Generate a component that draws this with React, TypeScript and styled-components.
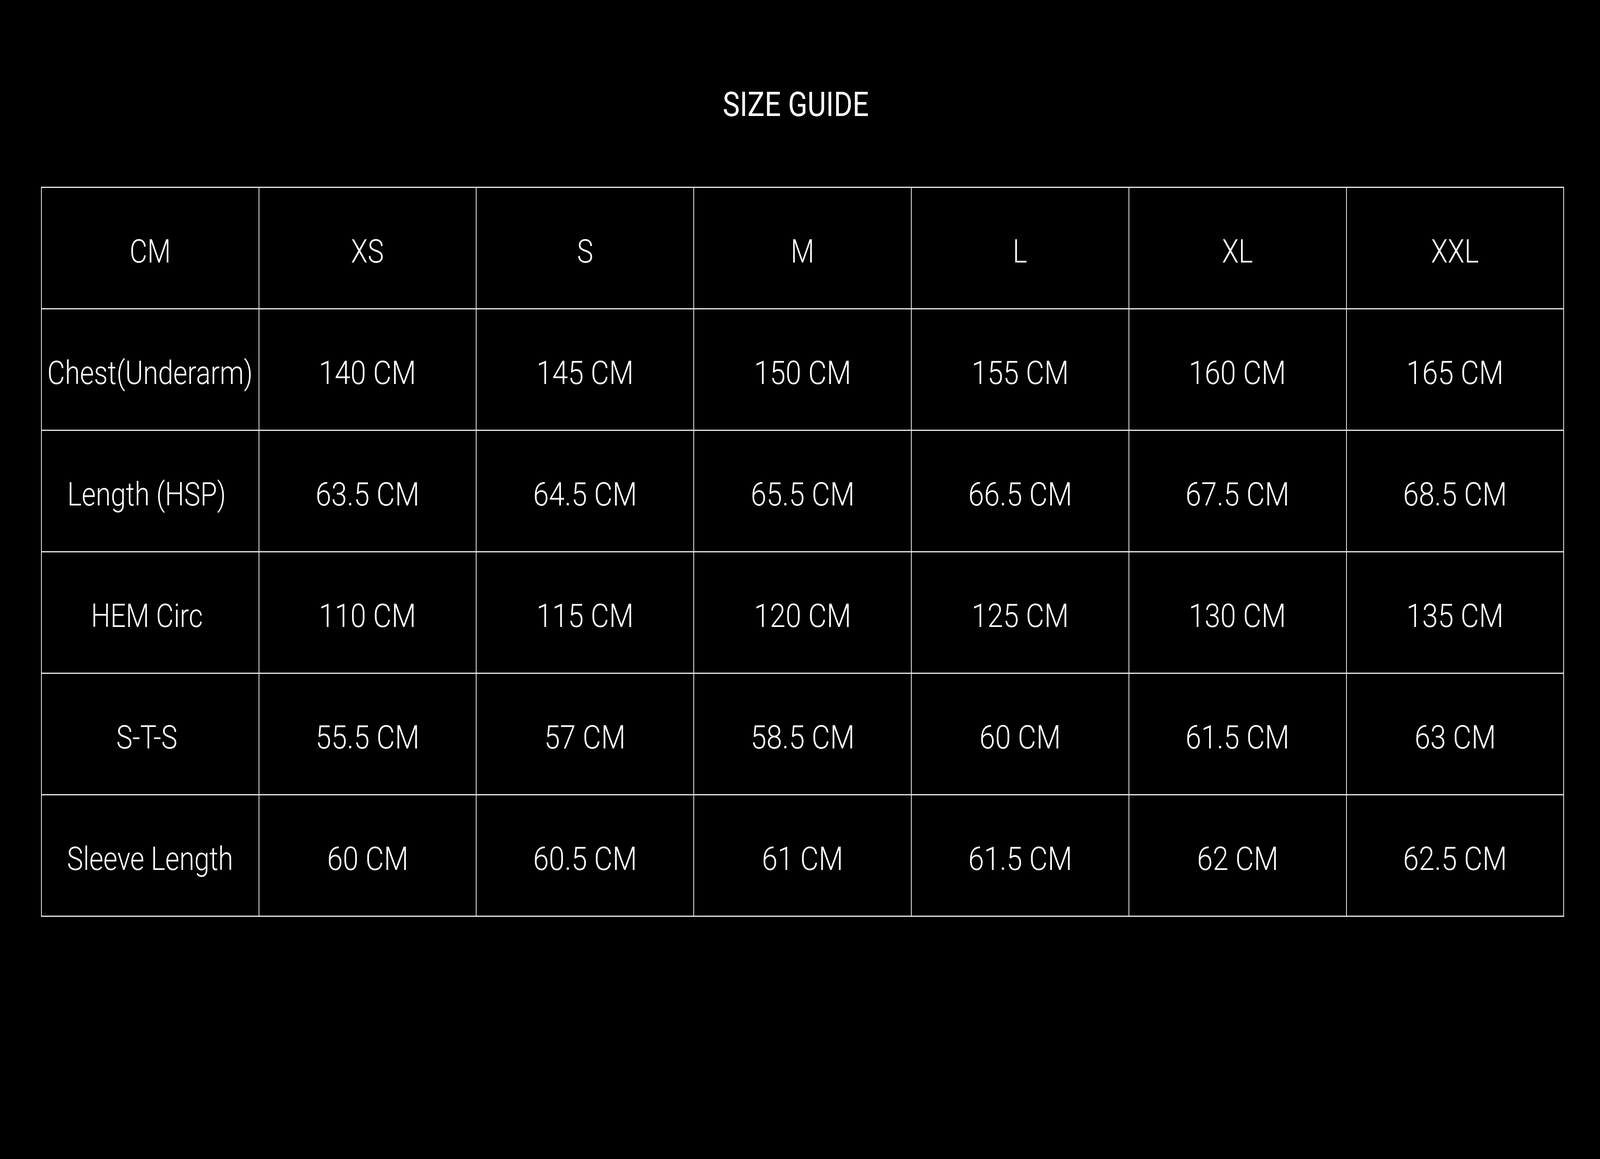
import React from "react";
import styled, { createGlobalStyle } from "styled-components";

const GlobalStyle = createGlobalStyle`
  html, body {
    margin: 0;
    padding: 0;
    background: #000;
  }
  body {
    font-family: Roboto, "Liberation Sans", Arial, sans-serif;
    color: #fff;
    overflow: hidden;
  }
`;

// horizontal sizes are given in vw of the 6959px design width
const vw = (px: number) => `${(px / 6959) * 100}vw`;

const Page = styled.div`
  width: 100vw;
  min-height: 100vh;
  background: #000;
  padding-top: 217px;
  box-sizing: border-box;
`;

const Title = styled.h1`
  margin: 0 0 161px;
  padding-right: ${vw(38)};
  height: 100px;
  line-height: 100px;
  font-size: 87px;
  font-weight: 400;
  text-align: center;
  white-space: nowrap;
`;

const Wide = styled.span<{ $stretch: number }>`
  display: inline-block;
  white-space: pre;
  transform: scaleX(${(p) => p.$stretch});
  transform-origin: center;
`;

const Grid = styled.div`
  margin-left: ${vw(178)};
  width: ${vw(6622)};
  display: grid;
  grid-template-columns: repeat(7, 1fr);
  grid-auto-rows: 311px;
  border-top: 3px solid #ececec;
  border-left: 2px solid #ececec;
`;

const Cell = styled.div`
  box-sizing: border-box;
  min-width: 0;
  border-right: 2px solid #ececec;
  border-bottom: 3px solid #ececec;
  display: flex;
  align-items: center;
  justify-content: center;
  padding-top: 16px;
  font-size: 84px;
  font-weight: 300;
  color: #fff;
  white-space: nowrap;
`;

const sizes = ["XS", "S", "M", "L", "XL", "XXL"];

const rows: { label: string; values: string[] }[] = [
  { label: "Chest(Underarm)", values: ["140", "145", "150", "155", "160", "165"] },
  { label: "Length (HSP) ", values: ["63.5", "64.5", "65.5", "66.5", "67.5", "68.5"] },
  { label: "HEM Circ ", values: ["110", "115", "120", "125", "130", "135"] },
  { label: "S-T-S ", values: ["55.5", "57", "58.5", "60", "61.5", "63"] },
  { label: "Sleeve Length", values: ["60", "60.5", "61", "61.5", "62", "62.5"] },
];

export default function App() {
  // the design is wider than tall; squeeze the glyph stretch to the real window width
  const k = window.innerWidth / 6959;
  const label = 1.41 * k;
  const value = 1.47 * k;

  return (
    <>
      <GlobalStyle />
      <Page>
        <Title>
          <Wide $stretch={1.43 * k}>SIZE GUIDE</Wide>
        </Title>
        <Grid>
          <Cell>
            <Wide $stretch={label}>CM</Wide>
          </Cell>
          {sizes.map((s) => (
            <Cell key={s}>
              <Wide $stretch={label}>{s}</Wide>
            </Cell>
          ))}
          {rows.map((r) => (
            <React.Fragment key={r.label}>
              <Cell>
                <Wide $stretch={label}>{r.label}</Wide>
              </Cell>
              {r.values.map((v, i) => (
                <Cell key={i}>
                  <Wide $stretch={value}>{v} CM</Wide>
                </Cell>
              ))}
            </React.Fragment>
          ))}
        </Grid>
      </Page>
    </>
  );
}
